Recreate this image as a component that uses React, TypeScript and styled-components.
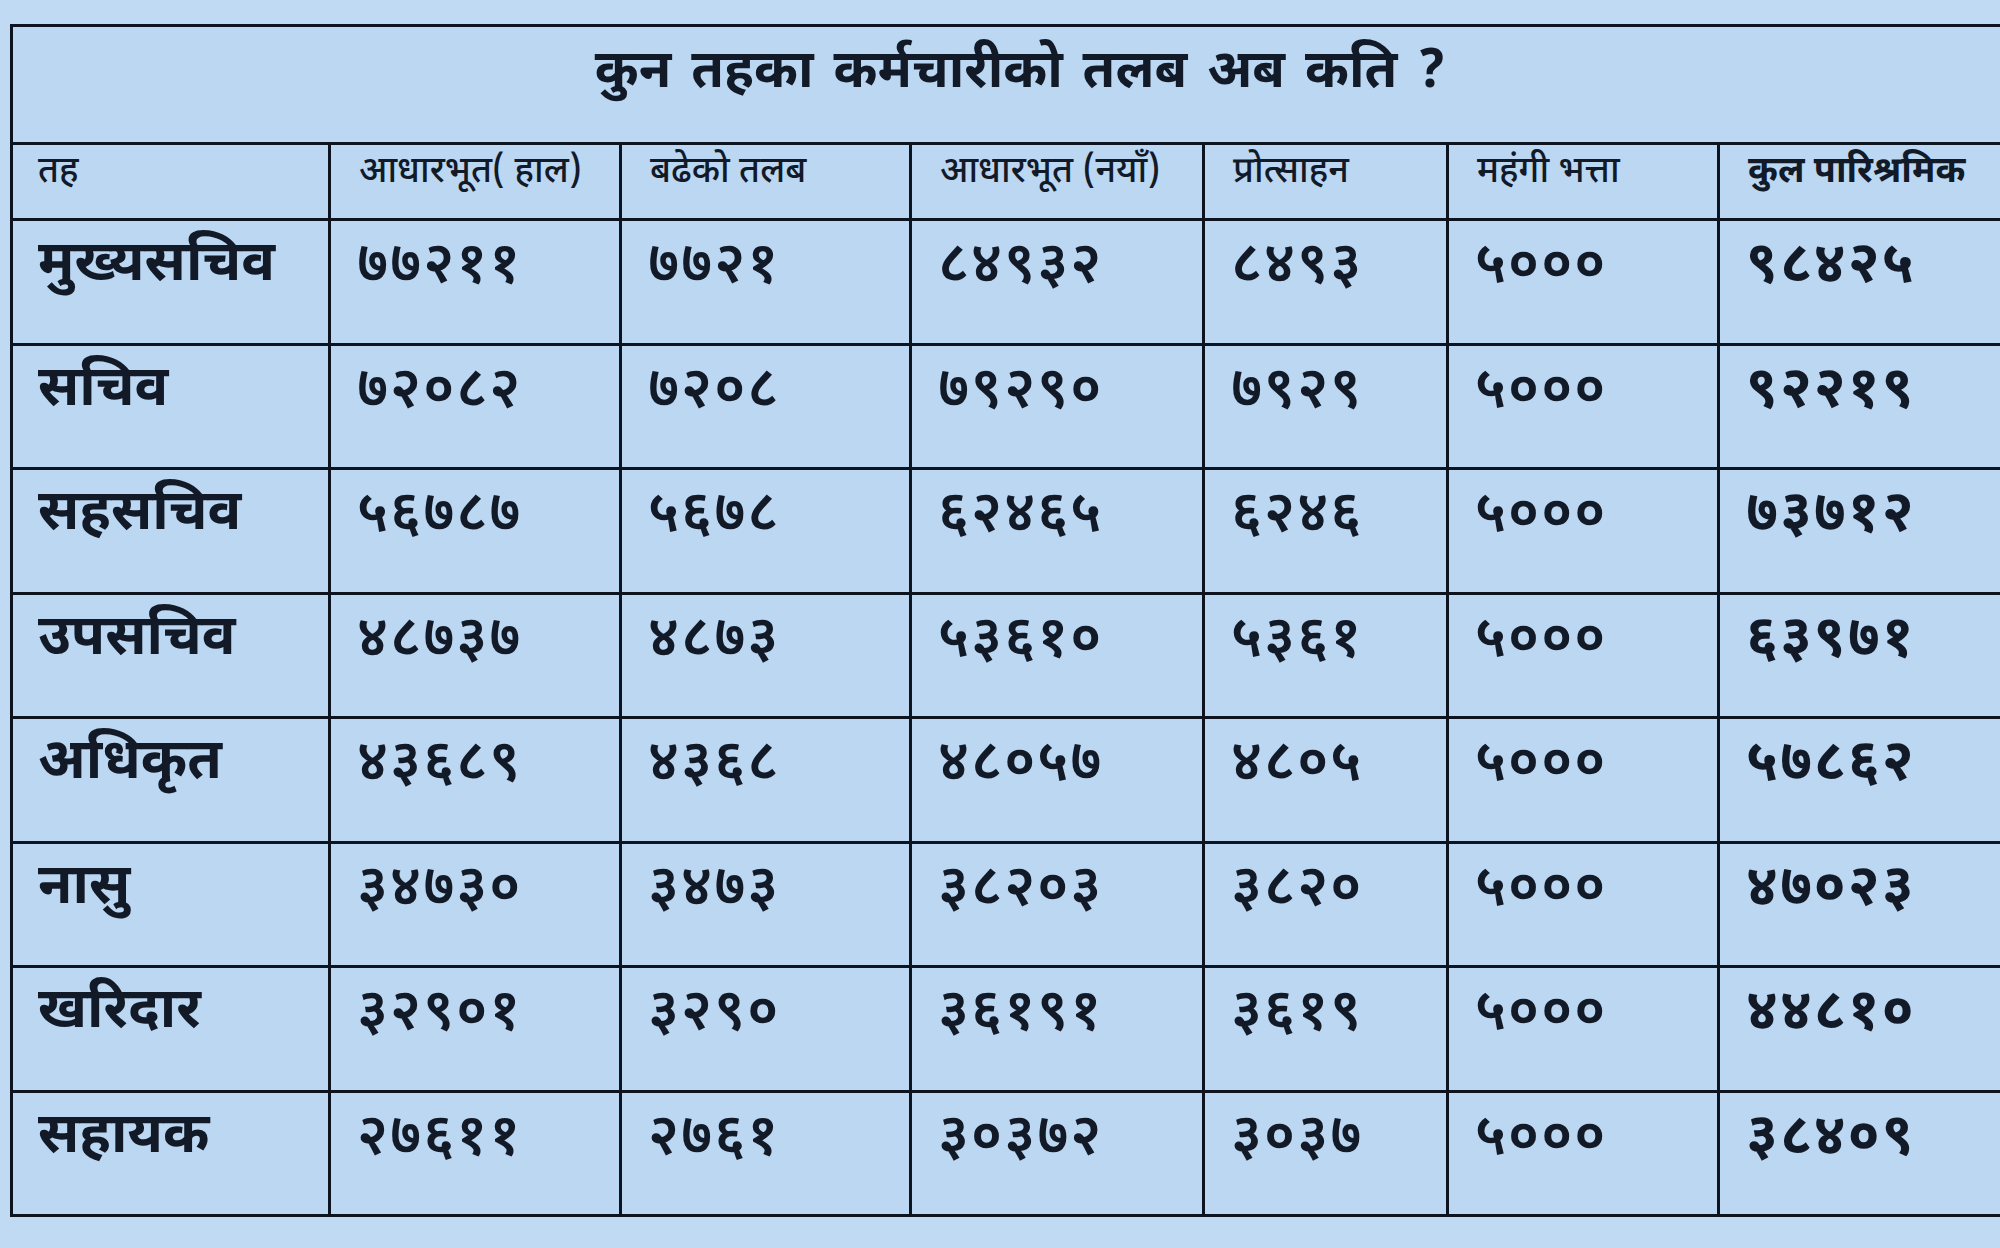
import React from "react";
import styled, { createGlobalStyle } from "styled-components";

const Global = createGlobalStyle`
  html, body {
    margin: 0;
    padding: 0;
    background: #c0daf3;
    overflow: hidden;
  }
  body {
    width: 2000px;
    height: 1248px;
    font-family: "Noto Sans Devanagari", "Lohit Devanagari", "Noto Sans", "FreeSans", sans-serif;
    color: #121a28;
  }
`;

const Page = styled.div`
  padding: 24px 0 0 10px;
  width: 2010px;
`;

const Table = styled.div`
  display: grid;
  grid-template-columns: 315px 288px 287px 290px 241px 268px 290px;
  grid-template-rows: 115px 73px repeat(8, 121.5px);
  gap: 3px;
  padding: 3px 0 3px 3px;
  background: #0d1420;
  width: 2000px;
  box-sizing: border-box;
`;

const Cell = styled.div`
  background: #bcd7f2;
  display: flex;
  align-items: flex-start;
  box-sizing: border-box;
  white-space: nowrap;
`;

const TitleCell = styled(Cell)`
  grid-column: 1 / -1;
  justify-content: center;
  padding: 16px 0 0 18px;
  font-size: 53px;
  font-weight: 700;
  line-height: 1.2;
  word-spacing: 6px;
`;

const HeadCell = styled(Cell)<{ $bold?: boolean; $first?: boolean }>`
  padding: 4px 0 0 ${(p) => (p.$first ? 25 : 28)}px;
  font-size: 36px;
  font-weight: ${(p) => (p.$bold ? 700 : 500)};
  line-height: 1.4;
`;

const RankCell = styled(Cell)`
  padding: 10px 0 0 25px;
  font-size: 56px;
  font-weight: 700;
  line-height: 1.3;
`;

const NumCell = styled(Cell)<{ $bold?: boolean }>`
  padding: 10px 0 0 26px;
  font-size: 57px;
  font-weight: ${(p) => (p.$bold ? 700 : 600)};
  line-height: 1.3;
  letter-spacing: 2px;
`;

const headers = [
  "तह",
  "आधारभूत( हाल)",
  "बढेको तलब",
  "आधारभूत (नयाँ)",
  "प्रोत्साहन",
  "महंगी भत्ता",
  "कुल पारिश्रमिक",
];

const rows: string[][] = [
  ["मुख्यसचिव", "७७२११", "७७२१", "८४९३२", "८४९३", "५०००", "९८४२५"],
  ["सचिव", "७२०८२", "७२०८", "७९२९०", "७९२९", "५०००", "९२२१९"],
  ["सहसचिव", "५६७८७", "५६७८", "६२४६५", "६२४६", "५०००", "७३७१२"],
  ["उपसचिव", "४८७३७", "४८७३", "५३६१०", "५३६१", "५०००", "६३९७१"],
  ["अधिकृत", "४३६८९", "४३६८", "४८०५७", "४८०५", "५०००", "५७८६२"],
  ["नासु", "३४७३०", "३४७३", "३८२०३", "३८२०", "५०००", "४७०२३"],
  ["खरिदार", "३२९०१", "३२९०", "३६१९१", "३६१९", "५०००", "४४८१०"],
  ["सहायक", "२७६११", "२७६१", "३०३७२", "३०३७", "५०००", "३८४०९"],
];

export default function App() {
  return (
    <>
      <Global />
      <Page>
        <Table>
          <TitleCell>कुन तहका कर्मचारीको तलब अब कति ?</TitleCell>
          {headers.map((h, i) => (
            <HeadCell key={h} $first={i === 0} $bold={i === 6}>
              {h}
            </HeadCell>
          ))}
          {rows.map((r) => (
            <React.Fragment key={r[0]}>
              <RankCell>{r[0]}</RankCell>
              {r.slice(1).map((v, j) => (
                <NumCell key={j} $bold={j === 5}>
                  {v}
                </NumCell>
              ))}
            </React.Fragment>
          ))}
        </Table>
      </Page>
    </>
  );
}
